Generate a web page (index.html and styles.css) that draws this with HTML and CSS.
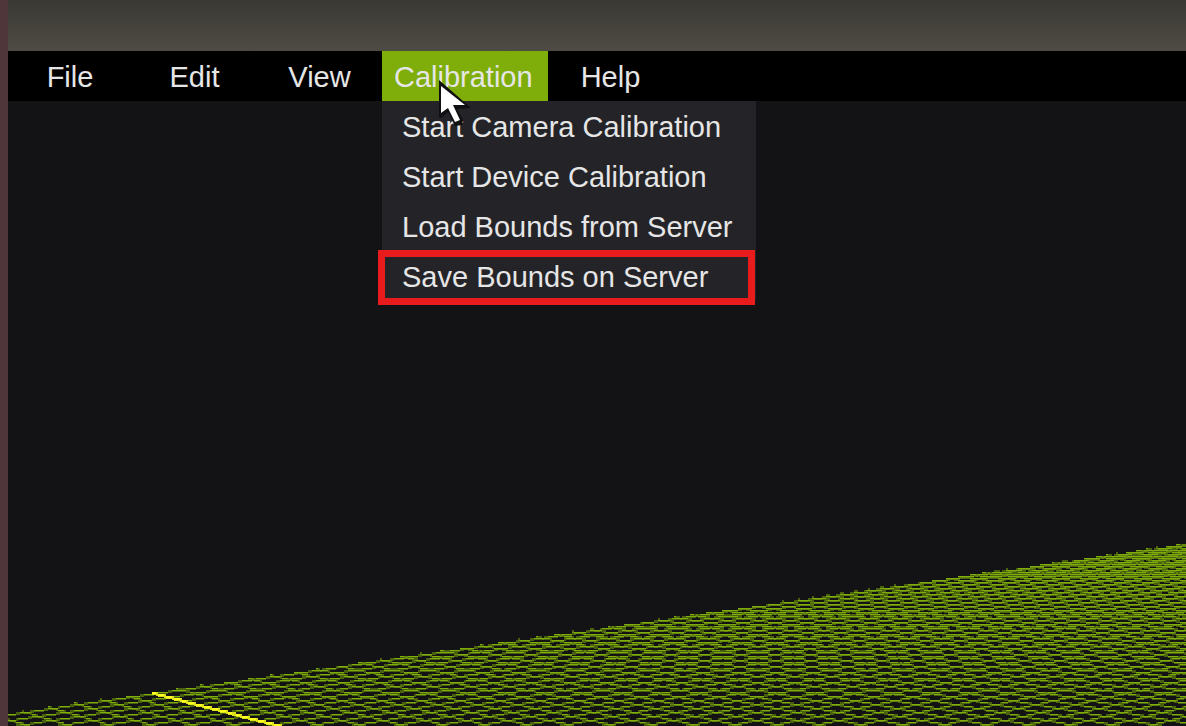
FILE: index.html
```html
<!DOCTYPE html>
<html lang="en">
<head>
<meta charset="utf-8">
<title>Calibration</title>
<link rel="stylesheet" href="styles.css">
</head>
<body>
<div class="window">
  <header class="titlebar"></header>
  <nav class="menubar" aria-label="Main menu">
    <button class="menu-button" type="button">File</button>
    <button class="menu-button" type="button">Edit</button>
    <button class="menu-button" type="button">View</button>
    <div class="menu">
      <button class="menu-button active" type="button" aria-haspopup="true" aria-expanded="true">Calibration</button>
      <div class="dropdown" role="menu">
        <button class="menu-item" type="button" role="menuitem">Start Camera Calibration</button>
        <button class="menu-item" type="button" role="menuitem">Start Device Calibration</button>
        <button class="menu-item" type="button" role="menuitem">Load Bounds from Server</button>
        <button class="menu-item highlighted" type="button" role="menuitem">Save Bounds on Server</button>
      </div>
      <svg class="cursor" width="36" height="52" viewBox="0 0 36 52" aria-hidden="true">
        <path d="M1 1 L1 38 L3 39 L10 33 L17 47 L24 46 L25 41 L19 30 L33 29 Z" fill="#101012"/>
        <path d="M3 7 L3 34 L10 29 L17 43 L22 41 L15 26 L27 26 Z" fill="#fff"/>
      </svg>
    </div>
    <button class="menu-button" type="button">Help</button>
  </nav>
  <main class="scene">
    <canvas class="grid" id="grid" width="1178" height="186"></canvas>
  </main>
</div>
<script src="grid.js"></script>
</body>
</html>
```
FILE: styles.css
```css
* {
  box-sizing: border-box;
}

body {
  margin: 0;
  background: #4e363b;
  font-family: "Liberation Sans", Arial, sans-serif;
  font-size: 29px;
  line-height: 48px;
  color: #e6e6e6;
}

.window {
  display: flex;
  flex-direction: column;
  min-height: 100vh;
  margin-left: 8px;
  background: #131315;
}

.titlebar {
  height: 51px;
  background: linear-gradient(#3b3934, #4d4b43);
}

.menubar {
  display: flex;
  height: 50px;
  background: #000;
}

button {
  border: 0;
  margin: 0;
  background: none;
  color: inherit;
  font: inherit;
  white-space: nowrap;
}

.menu-button {
  min-width: 125px;
  height: 50px;
  padding: 2px 12px 0;
}

.menu-button:first-child {
  min-width: 124px;
}

.menu-button.active {
  min-width: 166px;
  background: #7fae0a;
  text-align: left;
}

.menu {
  position: relative;
}

.dropdown {
  position: absolute;
  z-index: 1;
  top: 100%;
  left: 0;
  display: flex;
  flex-direction: column;
  width: 374px;
  background: #242428;
}

.menu-item {
  position: relative;
  height: 50px;
  padding: 2px 20px 0;
  text-align: left;
}

.highlighted::after {
  content: "";
  position: absolute;
  inset: -1px 1px -4px -4px;
  border: 7px solid #e81c1c;
}

.cursor {
  position: absolute;
  z-index: 2;
  top: 28px;
  left: 56px;
}

.scene {
  display: flex;
  flex: 1;
  flex-direction: column;
  justify-content: flex-end;
}

.grid {
  display: block;
  width: 100%;
  height: auto;
}
```
FILE: grid.js
```js
// Floor grid in two-point perspective, drawn with stepped lines:
// bright dashes joined by darker blocks.
const canvas = document.getElementById("grid");
const ctx = canvas.getContext("2d");
const W = canvas.width;
const H = canvas.height;
const CELL = 2;
const STEP = 42;
const right = { x: 2878, y: -240 };
const left = { x: -1363, y: -240 };

function edgeY(x) {
  return 173 - 0.1435 * x;
}

function drawLine(vp, floorX, bright, dim, weight) {
  const slope = (H - vp.y) / (floorX - vp.x);
  for (let x = 0; x < W; x += CELL) {
    const y = vp.y + slope * (x - vp.x);
    if (y < edgeY(x) - 1 || y > H + 2) continue;
    const row = Math.round(y / CELL);
    const offset = Math.abs(y / CELL - row);
    const top = row * CELL;
    ctx.fillStyle = dim;
    if (offset > 0.36) {
      ctx.fillRect(x, Math.floor(y / CELL) * CELL, CELL, 3 + weight);
    } else {
      ctx.fillRect(x, top, CELL, 2 + weight);
      ctx.fillStyle = bright;
      ctx.fillRect(x, top, CELL, 1 + weight);
    }
  }
}

for (let i = 0; i < 60; i++) {
  drawLine(right, -82 + i * STEP, "#7fae0a", "rgba(127, 174, 10, 0.5)", 0);
}
for (let i = -8; i < 100; i++) {
  drawLine(left, 275 + i * STEP, "#7fae0a", "rgba(127, 174, 10, 0.5)", 0);
}
drawLine(left, 275, "#ffff20", "#dde01c", 1);
```
